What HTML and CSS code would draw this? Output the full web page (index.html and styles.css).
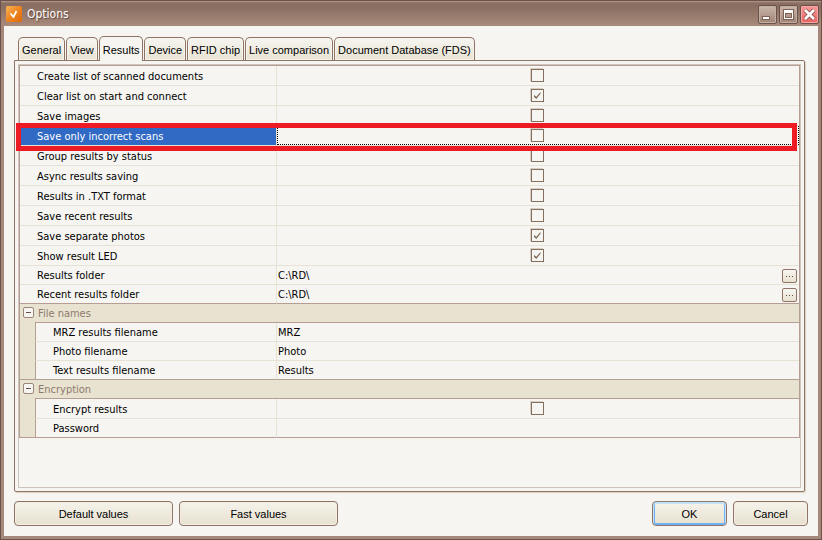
FILE: index.html
```html
<!DOCTYPE html>
<html lang="en">

<head>
    <meta charset="UTF-8">
    <meta name="viewport" content="width=device-width, initial-scale=1.0">
    <title>Options</title>
    <link rel="stylesheet" href="styles.css">
</head>

<body>
    <div class="window">
        <header class="titlebar">
            <svg class="app-icon" width="16" height="16" viewBox="0 0 16 16">
                <defs>
                    <linearGradient id="orange" x1="0" y1="0" x2="1" y2="1">
                        <stop offset="0" stop-color="#f9b45c" />
                        <stop offset="0.5" stop-color="#ee8420" />
                        <stop offset="1" stop-color="#e06a0c" />
                    </linearGradient>
                </defs>
                <rect width="16" height="16" rx="1.5" fill="url(#orange)" />
                <path d="M4.5 7.5l3 3.5 3-6" fill="none" stroke="#fff" stroke-width="1.8" />
            </svg>
            <h1 class="title">Options</h1>
            <div class="window-buttons">
                <button class="win-btn" type="button" aria-label="Minimize">
                    <svg width="17" height="17" viewBox="0 0 17 17">
                        <rect x="3" y="10" width="8" height="4" fill="#7d6255" />
                        <rect x="4" y="11" width="6" height="2" fill="#fff" />
                    </svg>
                </button>
                <button class="win-btn" type="button" aria-label="Maximize">
                    <svg width="17" height="17" viewBox="0 0 17 17">
                        <rect x="3" y="3" width="11" height="11" fill="#7d6255" />
                        <path d="M4 4h9v9H4zM5 7v5h7V7z" fill="#fff" fill-rule="evenodd" />
                        <rect x="6" y="8" width="5" height="3" fill="#b39a8d" />
                    </svg>
                </button>
                <button class="win-btn win-close" type="button" aria-label="Close">
                    <svg width="17" height="17" viewBox="0 0 17 17">
                        <path d="M4 4l9 9M13 4l-9 9" stroke="#8c4a48" stroke-width="4.5" />
                        <path d="M4 4l9 9M13 4l-9 9" stroke="#fff" stroke-width="2.8" />
                    </svg>
                </button>
            </div>
        </header>

        <main class="content">
            <div class="tabs" role="tablist">
                <button class="tab" type="button" role="tab">General</button>
                <button class="tab" type="button" role="tab">View</button>
                <button class="tab active" type="button" role="tab" aria-selected="true">Results</button>
                <button class="tab" type="button" role="tab">Device</button>
                <button class="tab" type="button" role="tab">RFID chip</button>
                <button class="tab" type="button" role="tab">Live comparison</button>
                <button class="tab" type="button" role="tab">Document Database (FDS)</button>
            </div>

            <div class="panel" role="tabpanel">
                <div class="grid-box">
                    <table class="options">
                        <colgroup>
                            <col class="col-gutter">
                            <col class="col-name">
                            <col>
                        </colgroup>
                        <tbody>
                            <tr class="tall">
                                <td class="name" colspan="2"><label for="create-list">Create list of scanned documents</label></td>
                                <td class="value check"><input type="checkbox" id="create-list"></td>
                            </tr>
                            <tr class="tall">
                                <td class="name" colspan="2"><label for="clear-list">Clear list on start and connect</label></td>
                                <td class="value check"><input type="checkbox" id="clear-list" checked></td>
                            </tr>
                            <tr class="tall">
                                <td class="name" colspan="2"><label for="save-images">Save images</label></td>
                                <td class="value check"><input type="checkbox" id="save-images"></td>
                            </tr>
                            <tr class="tall selected">
                                <td class="name" colspan="2"><label for="save-incorrect">Save only incorrect scans</label></td>
                                <td class="value check"><input type="checkbox" id="save-incorrect"></td>
                            </tr>
                            <tr class="tall">
                                <td class="name" colspan="2"><label for="group-results">Group results by status</label></td>
                                <td class="value check"><input type="checkbox" id="group-results"></td>
                            </tr>
                            <tr class="tall">
                                <td class="name" colspan="2"><label for="async-saving">Async results saving</label></td>
                                <td class="value check"><input type="checkbox" id="async-saving"></td>
                            </tr>
                            <tr class="tall">
                                <td class="name" colspan="2"><label for="txt-format">Results in .TXT format</label></td>
                                <td class="value check"><input type="checkbox" id="txt-format"></td>
                            </tr>
                            <tr class="tall">
                                <td class="name" colspan="2"><label for="save-recent">Save recent results</label></td>
                                <td class="value check"><input type="checkbox" id="save-recent"></td>
                            </tr>
                            <tr class="tall">
                                <td class="name" colspan="2"><label for="save-photos">Save separate photos</label></td>
                                <td class="value check"><input type="checkbox" id="save-photos" checked></td>
                            </tr>
                            <tr class="tall">
                                <td class="name" colspan="2"><label for="result-led">Show result LED</label></td>
                                <td class="value check"><input type="checkbox" id="result-led" checked></td>
                            </tr>
                            <tr>
                                <td class="name" colspan="2"><label for="results-folder">Results folder</label></td>
                                <td class="value">
                                    <div class="field">
                                        <input type="text" id="results-folder" value="C:\RD\">
                                        <button class="browse" type="button" aria-label="Browse results folder"><i></i><i></i><i></i></button>
                                    </div>
                                </td>
                            </tr>
                            <tr class="last">
                                <td class="name" colspan="2"><label for="recent-folder">Recent results folder</label></td>
                                <td class="value">
                                    <div class="field">
                                        <input type="text" id="recent-folder" value="C:\RD\">
                                        <button class="browse" type="button" aria-label="Browse recent results folder"><i></i><i></i><i></i></button>
                                    </div>
                                </td>
                            </tr>
                        </tbody>
                        <tbody class="group">
                            <tr>
                                <td class="gutter" rowspan="4"><button class="toggle" type="button" aria-label="Collapse file names"></button></td>
                                <th class="category" colspan="2">File names</th>
                            </tr>
                            <tr>
                                <td class="name"><label for="mrz-name">MRZ results filename</label></td>
                                <td class="value"><div class="field"><input type="text" id="mrz-name" value="MRZ"></div></td>
                            </tr>
                            <tr>
                                <td class="name"><label for="photo-name">Photo filename</label></td>
                                <td class="value"><div class="field"><input type="text" id="photo-name" value="Photo"></div></td>
                            </tr>
                            <tr class="last">
                                <td class="name"><label for="text-name">Text results filename</label></td>
                                <td class="value"><div class="field"><input type="text" id="text-name" value="Results"></div></td>
                            </tr>
                        </tbody>
                        <tbody class="group">
                            <tr>
                                <td class="gutter" rowspan="3"><button class="toggle" type="button" aria-label="Collapse encryption"></button></td>
                                <th class="category" colspan="2">Encryption</th>
                            </tr>
                            <tr class="tall">
                                <td class="name"><label for="encrypt">Encrypt results</label></td>
                                <td class="value check"><input type="checkbox" id="encrypt"></td>
                            </tr>
                            <tr class="last">
                                <td class="name"><label for="password">Password</label></td>
                                <td class="value"><div class="field"><input type="password" id="password"></div></td>
                            </tr>
                        </tbody>
                    </table>
                </div>
            </div>

            <footer class="actions">
                <button class="btn btn-wide" type="button">Default values</button>
                <button class="btn btn-wide" type="button">Fast values</button>
                <button class="btn btn-ok" type="button">OK</button>
                <button class="btn" type="button">Cancel</button>
            </footer>
        </main>
    </div>
</body>

</html>
```
FILE: styles.css
```css
* {
    box-sizing: border-box;
}

body {
    margin: 0;
    font-family: "DejaVu Sans Condensed", "Noto Sans", sans-serif;
    font-size: 11px;
    color: #000;
    background-color: #f6f5f1;
}

button,
input {
    font: inherit;
    color: inherit;
    margin: 0;
    padding: 0;
}

/* Window frame */

.window {
    display: flex;
    flex-direction: column;
    min-height: 100vh;
    padding: 0 3px 3px;
    border: 1px solid #6b5248;
    background-color: #a58879;
}

.titlebar {
    display: flex;
    align-items: center;
    height: 25px;
    margin: 0 -3px;
    padding: 0 2px 0 5px;
    background: linear-gradient(#b39a8d 0, #8a6e61 2px, #8a6e61 6px, #a88b7c 100%);
}

.title {
    flex: 1;
    margin: 0 0 0 5px;
    font-size: 12px;
    font-weight: normal;
    color: #fff;
    text-shadow: 1px 1px 1px #5e473d;
}

.window-buttons {
    display: flex;
    gap: 2px;
    padding-top: 2px;
}

.win-btn {
    width: 19px;
    height: 19px;
    border: 1px solid #6b5248;
    border-radius: 2px;
    background: linear-gradient(#c9b5aa, #a08474);
    box-shadow: inset 0 0 0 1px #c4afa4;
}

.win-btn svg {
    display: block;
}

.win-close {
    background: linear-gradient(#f59a98, #e86462);
    box-shadow: inset 0 0 0 1px #f6a5a3;
}

.content {
    flex: 1;
    display: flex;
    flex-direction: column;
    padding: 10px;
    background-color: #f6f5f1;
}

/* Tabs */

.tabs {
    display: flex;
    align-items: flex-end;
    gap: 1px;
    padding-left: 4px;
    font-family: "Liberation Sans", Arial, sans-serif;
}

.tab {
    height: 23px;
    padding: 2px 3px 0;
    border: 1px solid #8f7466;
    border-bottom: 0;
    border-radius: 5px 5px 0 0;
    background: linear-gradient(#f6f5f1, #e8e3d2);
    box-shadow: inset 0 0 0 1px #f6f4ec;
    white-space: nowrap;
}

.tab.active {
    position: relative;
    height: 25px;
    margin-bottom: -1px;
    background: #f6f5f1;
}

/* Options grid */

.panel {
    flex: 1;
    display: flex;
    margin-right: 3px;
    padding: 3px;
    border: 1px solid #8f7466;
    border-radius: 0 2px 2px 2px;
    box-shadow: 1px 1px 1px #d8d4c4;
}

.grid-box {
    flex: 1;
    border: 1px solid #cfc4bc;
}

.options {
    width: 100%;
    table-layout: fixed;
    border-spacing: 0;
    border: solid #b59f94;
    border-width: 1px 1px 0;
}

.col-gutter {
    width: 15px;
}

.col-name {
    width: 242px;
}

.options tr {
    height: 19px;
}

.options .tall {
    height: 20px;
}

.options td,
.options th {
    padding: 2px 0 0;
    border-bottom: 1px solid #e6e2d4;
    line-height: 16px;
    text-align: left;
}

.options .name {
    padding-left: 17px;
    border-right: 1px solid #e6e2d4;
}

.options .group .name {
    border-left: 1px solid #b59f94;
}

.options .last td,
.options .gutter,
.options .category {
    border-bottom-color: #b59f94;
}

.options .category {
    padding-left: 3px;
    font-weight: normal;
    color: #8f7a6e;
    background-color: #e8e2d0;
}

.options .gutter {
    padding: 3px 0 0 3px;
    line-height: 0;
    vertical-align: top;
    background-color: #e8e2d0;
}

.options .check {
    padding: 0 2px 0 0;
    text-align: center;
    line-height: 0;
}

.toggle {
    position: relative;
    width: 11px;
    height: 11px;
    border: 1px solid #9c8579;
    border-radius: 2px;
    background-color: #f6f5f1;
}

.toggle::before {
    content: "";
    position: absolute;
    top: 4px;
    left: 2px;
    width: 5px;
    height: 1px;
    background-color: #6b5248;
}

input[type="checkbox"] {
    appearance: none;
    position: relative;
    width: 13px;
    height: 13px;
    border: 1px solid #85705f;
    background-color: #f6f5f1;
    box-shadow: -1px -1px 0 #d8cfc4;
}

input[type="checkbox"]:checked::before {
    content: "";
    position: absolute;
    top: 2px;
    left: 2px;
    width: 7px;
    height: 7px;
    background-color: #85705f;
    clip-path: polygon(0 35%, 40% 68%, 100% 0, 100% 25%, 40% 100%, 0 65%);
}

.field {
    display: flex;
    align-items: center;
    padding: 0 2px 0 1px;
}

.field input {
    flex: 1;
    min-width: 0;
    height: 16px;
    border: 0;
    outline: 0;
    background: transparent;
}

.browse {
    display: flex;
    align-items: center;
    justify-content: center;
    gap: 2px;
    width: 15px;
    height: 14px;
    border: 1px solid #8f7466;
    border-radius: 2px;
    background: linear-gradient(#f6f5f1, #e8e2d0);
}

.browse i {
    width: 1px;
    height: 1px;
    background-color: #5e473d;
}

/* Selected row with its marker frame */

.selected {
    position: relative;
}

.selected .name {
    color: #fff;
    background-color: #316ac5;
    background-clip: padding-box;
}

.selected .value {
    position: relative;
}

.selected .value::before {
    content: "";
    position: absolute;
    inset: 0;
    border: 1px dotted #000;
    pointer-events: none;
}

.selected .name::after {
    content: "";
    position: absolute;
    z-index: 1;
    inset: -3px 2px -5px -4px;
    border: 5px solid #ed1c24;
    pointer-events: none;
}

/* Bottom buttons */

.actions {
    display: flex;
    gap: 6px;
    padding-top: 9px;
    font-family: "Liberation Sans", Arial, sans-serif;
}

.btn {
    width: 75px;
    height: 25px;
    border: 1px solid #8f7466;
    border-radius: 4px;
    background: linear-gradient(#f5f3ec, #e8e0cf);
    box-shadow: inset 0 0 0 1px #f3efe4;
}

.btn-wide {
    width: 159px;
}

.btn-ok {
    margin-left: auto;
    box-shadow: inset 0 1px 0 1px #c2e2fa, inset 0 0 0 2px #6db2f5;
}
```
